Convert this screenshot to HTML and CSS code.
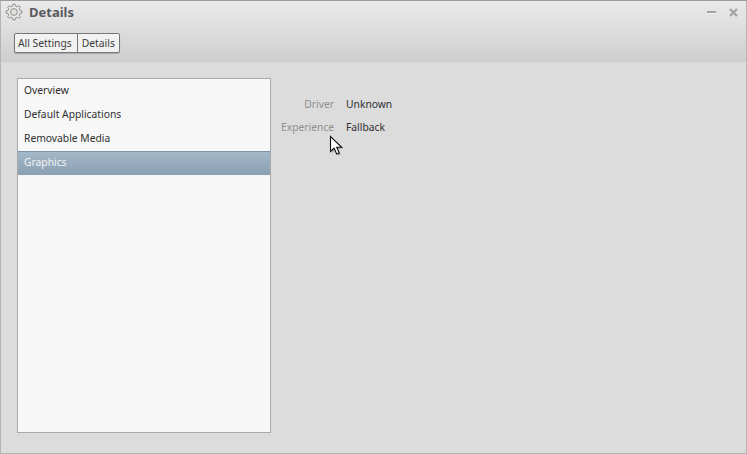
FILE: index.html
```html
<!DOCTYPE html>
<html lang="en">
<head>
<meta charset="utf-8">
<title>Details</title>
<link rel="stylesheet" href="styles.css">
</head>
<body>
<div class="window">
  <header class="header">
    <div class="titlebar">
      <svg class="gear" width="18" height="18" viewBox="-9 -9 18 18" aria-hidden="true">
        <polygon points="6.04,-1.39 7.92,-1.11 7.92,1.11 6.04,1.39 5.25,3.29 6.39,4.82 4.82,6.39 3.29,5.25 1.39,6.04 1.11,7.92 -1.11,7.92 -1.39,6.04 -3.29,5.25 -4.82,6.39 -6.39,4.82 -5.25,3.29 -6.04,1.39 -7.92,1.11 -7.92,-1.11 -6.04,-1.39 -5.25,-3.29 -6.39,-4.82 -4.82,-6.39 -3.29,-5.25 -1.39,-6.04 -1.11,-7.92 1.11,-7.92 1.39,-6.04 3.29,-5.25 4.82,-6.39 6.39,-4.82 5.25,-3.29" fill="#e6e6e4" stroke="#8f8f8c" stroke-width="1"/>
        <circle r="3.4" fill="#dededc" stroke="#8f8f8c" stroke-width="1"/>
      </svg>
      <span class="title">Details</span>
      <div class="controls">
        <span class="minimize"></span>
        <svg class="close" width="9" height="9" viewBox="0 0 9 9" aria-hidden="true">
          <path d="M1 1l7 7M8 1L1 8" stroke="#a3a3a0" stroke-width="2.2" fill="none"/>
        </svg>
      </div>
    </div>
    <nav class="crumbs">
      <span class="crumb">All Settings</span><span class="crumb">Details</span>
    </nav>
  </header>
  <main class="content">
    <ul class="list">
      <li class="item">Overview</li>
      <li class="item">Default Applications</li>
      <li class="item">Removable Media</li>
      <li class="item selected">Graphics</li>
    </ul>
    <dl class="info">
      <div class="row"><dt class="label">Driver</dt><dd class="value">Unknown</dd></div>
      <div class="row"><dt class="label">Experience</dt><dd class="value">Fallback</dd></div>
    </dl>
  </main>
  <svg class="cursor" width="16" height="22" viewBox="0 0 16 22" aria-hidden="true">
    <path d="M2 2v15l3.6-3.3 2.6 5.8 2.6-1.1-2.6-5.6h5z" fill="#000" opacity="0.25" transform="translate(1 1)"/>
    <path d="M1.5 1.5v15l3.6-3.3 2.6 5.8 2.6-1.1-2.6-5.6h5z" fill="#fff" stroke="#111" stroke-width="1.1"/>
  </svg>
</div>
</body>
</html>
```

FILE: styles.css
```css
html, body {
  margin: 0;
  padding: 0;
}

body {
  width: 747px;
  height: 454px;
  overflow: hidden;
  font-family: "Noto Sans", "Open Sans", sans-serif;
  font-size: 10.3px;
}

.window {
  position: relative;
  box-sizing: border-box;
  width: 747px;
  height: 454px;
  display: flex;
  flex-direction: column;
  background: #dcdcdc;
  border: 1px solid #b4b4b2;
  border-top-color: #9b9b99;
}

.header {
  box-sizing: border-box;
  height: 61px;
  background: linear-gradient(#eaeaea, #cfcfcf);
  border-bottom: 1px solid #cbcbc9;
  padding: 0 0 0 4px;
}

.titlebar {
  display: flex;
  align-items: center;
  height: 22px;
}

.gear {
  flex: none;
}

.title {
  margin-left: 6px;
  font-size: 13px;
  font-weight: 700;
  color: #5a5a5e;
}

.controls {
  margin-left: auto;
  display: flex;
  align-items: center;
  gap: 13px;
  padding-right: 8px;
}

.minimize {
  display: block;
  width: 9px;
  height: 2px;
  background: #a2a2a0;
  border-bottom: 1px solid #f2f2f2;
}

.crumbs {
  display: flex;
  width: max-content;
  margin: 10px 0 0 9px;
  background: #f2f2f0;
  border: 1px solid #77777a;
  border-radius: 2px;
  box-shadow: 0 1px 1px rgba(0, 0, 0, 0.2);
}

.crumb {
  height: 18px;
  line-height: 18px;
  padding: 0 5px 0 3px;
  color: #3a3a3c;
}

.crumb + .crumb {
  padding: 0 4px;
  border-left: 1px solid #77777a;
}

.content {
  flex: 1;
  display: flex;
  padding: 16px 16px 20px 16px;
  min-height: 0;
}

.list {
  box-sizing: border-box;
  flex: none;
  width: 254px;
  margin: 0;
  padding: 0;
  list-style: none;
  background: #f7f7f7;
  border: 1px solid #a9a9a7;
}

.item {
  height: 24px;
  line-height: 22px;
  padding-left: 6px;
  color: #2f2f31;
}

.selected {
  box-sizing: border-box;
  background: linear-gradient(#a3b8c9, #8a9fb1);
  border-top: 1px solid #7f93a4;
  line-height: 20px;
  color: #f2f2f2;
}

.info {
  margin: 16px 0 0 10px;
}

.row {
  display: flex;
  height: 23px;
  line-height: 20px;
}

.label {
  width: 53px;
  text-align: right;
  color: #8f8f8c;
}

.value {
  margin: 0 0 0 12px;
  color: #2f2f31;
}

.cursor {
  position: absolute;
  left: 328px;
  top: 134px;
}
```
